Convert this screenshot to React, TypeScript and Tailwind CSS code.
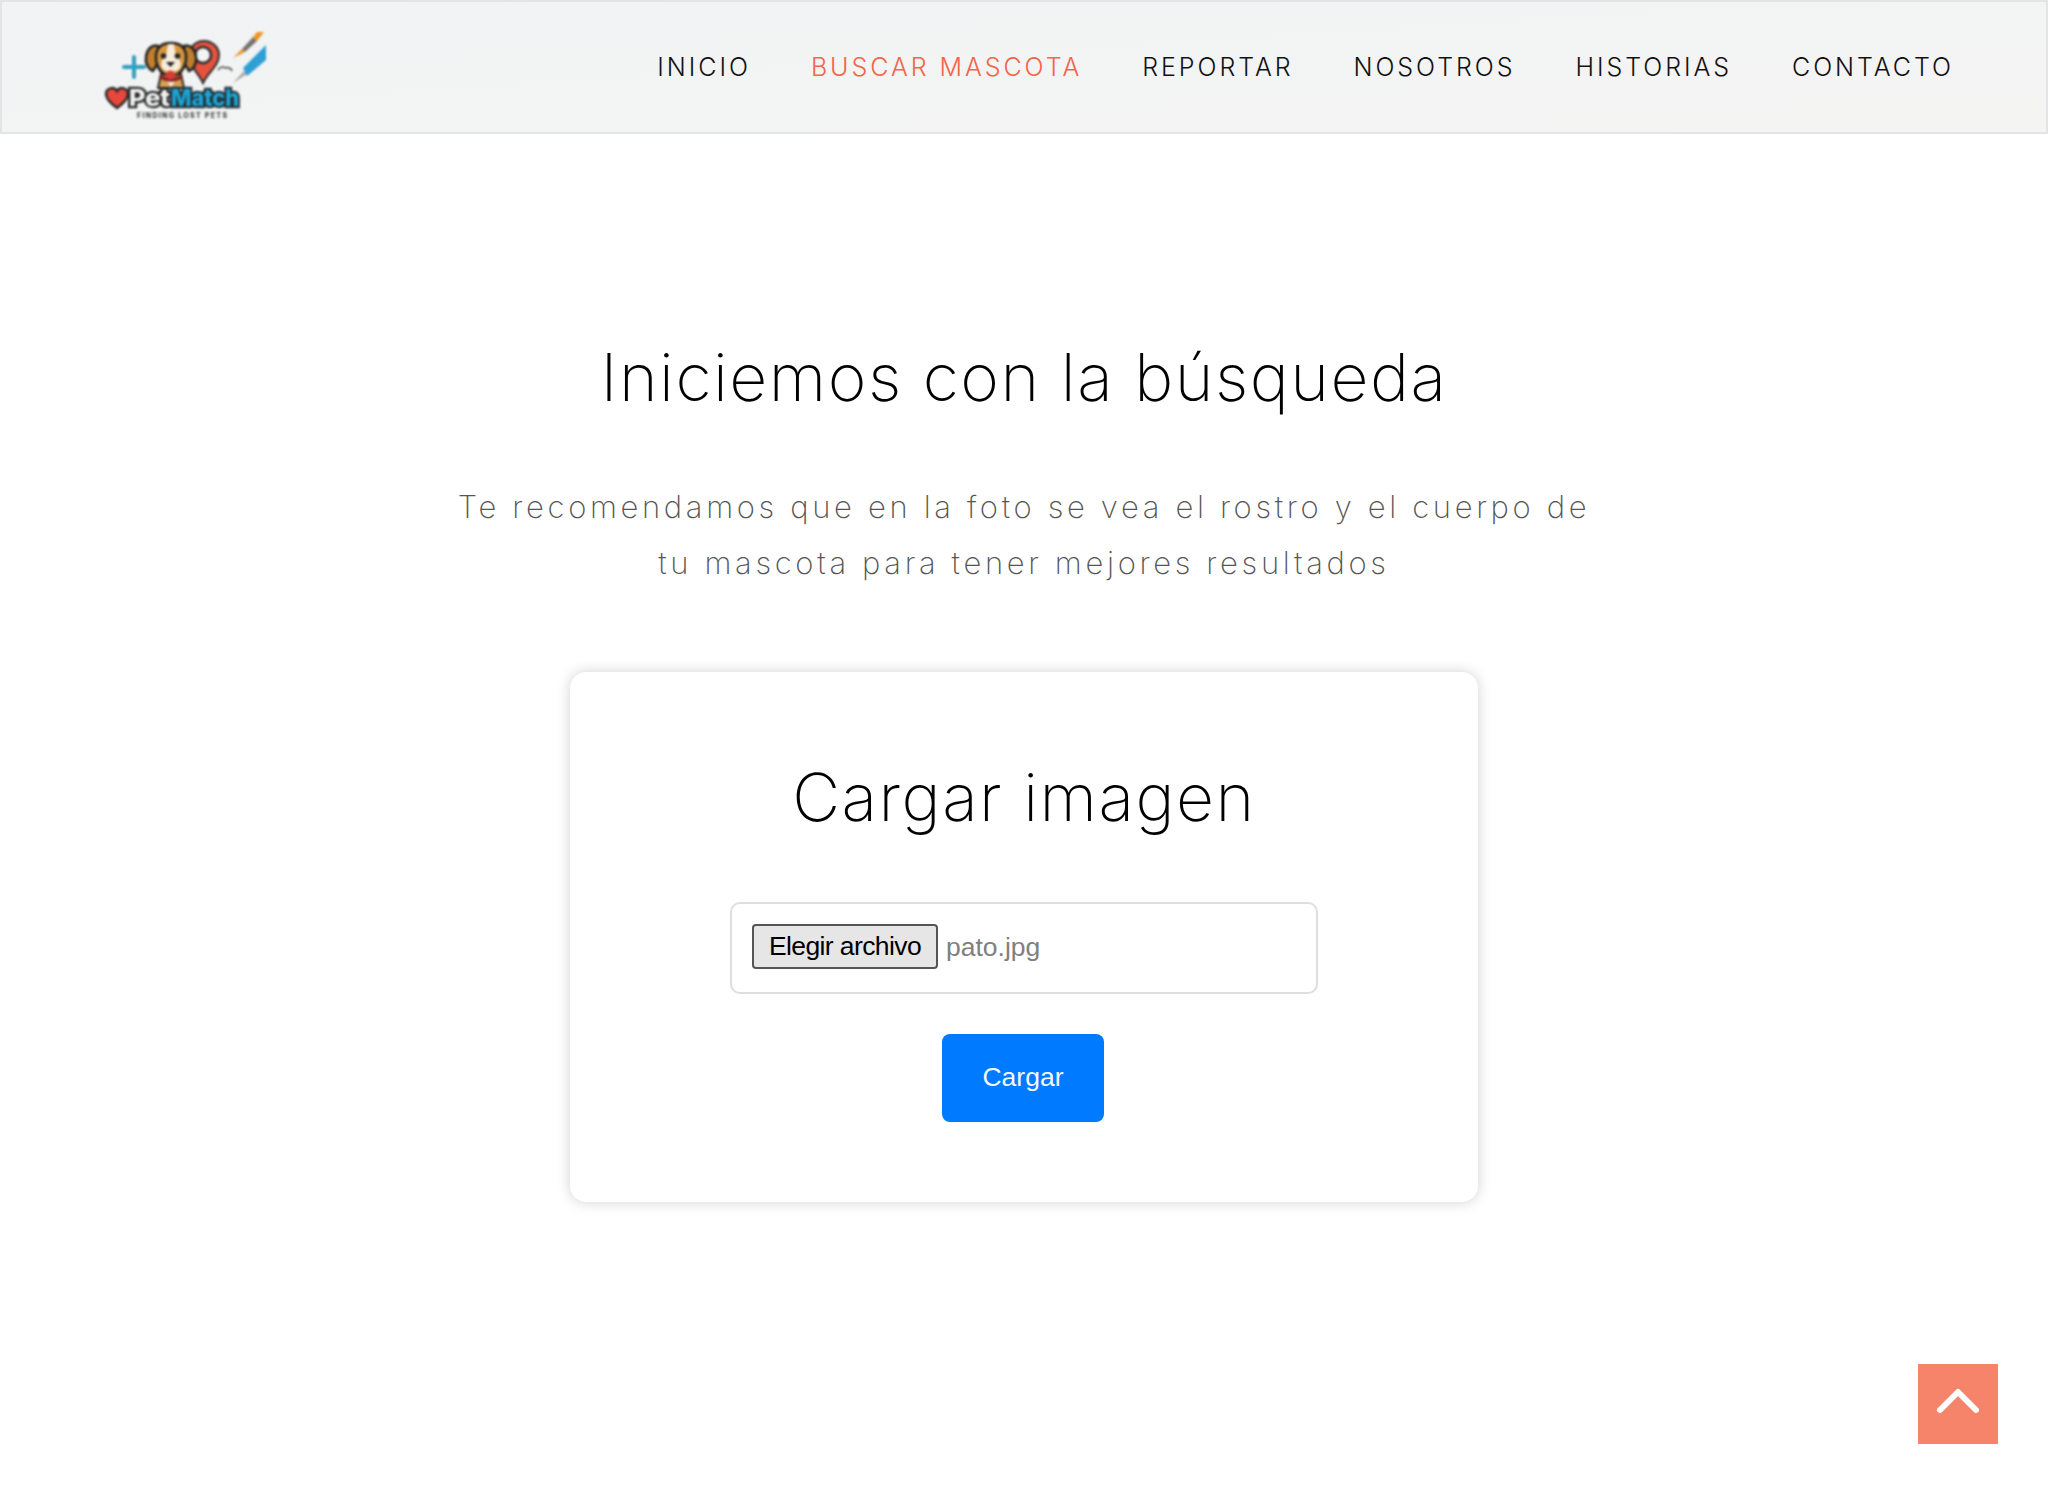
import { ChevronUp } from 'lucide-react';

const NAV_ITEMS = ['INICIO', 'BUSCAR MASCOTA', 'REPORTAR', 'NOSOTROS', 'HISTORIAS', 'CONTACTO'];

// Logo drawing: dog, pin, brushes and wordmark
const Logo = () => (
  <svg width="170" height="96" viewBox="0 0 170 96" className="mt-[18px] blur-[0.9px]">
    <path d="M24 39h20M34 29v20" stroke="#2f9fc0" strokeWidth="4" strokeLinecap="round" />
    {/* pin */}
    <path d="M104 13c-9 0-15 7-15 15 0 10 9 16 14 27 5-11 16-17 16-28 0-8-7-14-15-14z" fill="#e5533f" stroke="#2c2c2c" strokeWidth="2" />
    <circle cx="103" cy="27" r="8" fill="#f3f3f3" stroke="#2c2c2c" strokeWidth="2.500" />
    {/* dog */}
    <path d="M58 60l3-14h20l3 14z" fill="#d6a050" stroke="#2a2a2a" strokeWidth="2" />
    <path d="M66 51l5 9 5-9z" fill="#f5ead6" />
    <path d="M58 18c-6-2-11 3-12 11-1 6 2 12 7 14l5-8z" fill="#c07f2e" stroke="#222" strokeWidth="2.500" />
    <path d="M84 18c6-2 11 3 12 11 1 6-2 12-7 14l-5-8z" fill="#c07f2e" stroke="#222" strokeWidth="2.500" />
    <path d="M71 15c9 0 14 4 15 12 1 8-3 16-8 19-4 2-10 2-14 0-5-3-9-11-8-19 1-8 6-12 15-12z" fill="#d6963f" stroke="#222" strokeWidth="2.500" />
    <path d="M68 16h6l2 12c4 3 6 8 4 12-3 5-15 5-18 0-2-4 0-9 4-12z" fill="#f7eddc" />
    <circle cx="63.500" cy="28" r="2.800" fill="#222" />
    <circle cx="77.500" cy="28" r="2.800" fill="#222" />
    <path d="M66 34h9l-4.500 5z" fill="#1f1f1f" />
    <path d="M60 48c7 5 15 5 22 0" stroke="#8a2222" strokeWidth="3.500" fill="none" />
    <circle cx="70.500" cy="47" r="4.500" fill="#d83c35" />
    <path d="M118 42c2-3 5-4 7-2M125 40c3-1 6 0 7 3" stroke="#444" strokeWidth="1.500" fill="none" />
    {/* brushes */}
    <path d="M133 30l9-9 3 3z" fill="#e8932a" />
    <path d="M142 21l11-12 4 4-12 11z" fill="#77736c" />
    <path d="M153 9l4-5h7l-7 9z" fill="#ee9425" />
    <path d="M133 55l11-12 3 3z" fill="#a8a8a8" />
    <path d="M143 40l23-23v15l-19 16z" fill="#2f9fd6" />
    {/* wordmark */}
    <path d="M17 80c-7-5-11-9-11-14 0-6 8-8 11-3 3-5 11-3 11 3 0 5-4 9-11 14z" fill="#e8483c" stroke="#2a2a2a" strokeWidth="2.500" />
    <text x="29" y="78" fontFamily="Inter, sans-serif" fontSize="23" fontWeight="800" fill="#f2f2f2" stroke="#2a2a2a" strokeWidth="4.500" paintOrder="stroke" textLength="41" lengthAdjust="spacingAndGlyphs">Pet</text>
    <text x="71" y="78" fontFamily="Inter, sans-serif" fontSize="23" fontWeight="800" fill="#1da7d6" stroke="#22313a" strokeWidth="4.500" paintOrder="stroke" textLength="68" lengthAdjust="spacingAndGlyphs">Match</text>
    <text x="37" y="90" fontFamily="Inter, sans-serif" fontSize="7" fontWeight="800" fill="#444" textLength="90" lengthAdjust="spacing">FINDING LOST PETS</text>
  </svg>
);

export default function App() {
  return (
    <div className="relative min-h-[1494px] bg-white font-['Inter',sans-serif]">
      {/* Header */}
      <header className="flex h-[134px] items-center justify-between border-2 border-[#e3e4e6] bg-gradient-to-br from-[#f1f3f4] to-[#f4f4f3] pl-[98px] pr-[92px]">
        <Logo />
        <nav className="mt-[2px] flex gap-[60px]">
          {NAV_ITEMS.map((item) => (
            <a
              key={item}
              className={`text-[25px] font-light tracking-[2.95px] ${item === 'BUSCAR MASCOTA' ? 'text-[#f4654a]' : 'text-[#111]'}`}
            >
              {item}
            </a>
          ))}
        </nav>
      </header>

      {/* Main section */}
      <main className="flex flex-col items-center pt-[201px]">
        <h1 className="text-[66px] font-extralight leading-[84px] tracking-[1.5px] text-black">Iniciemos con la búsqueda</h1>
        <p className="mt-[60px] w-[1200px] text-center text-[31px] font-extralight leading-[56px] tracking-[3.65px] text-[#555]">
          Te recomendamos que en la foto se vea el rostro y el cuerpo de
          <br />
          tu mascota para tener mejores resultados
        </p>

        <section className="mt-[81px] flex h-[530px] w-[908px] flex-col items-center rounded-2xl bg-white pt-[83px] shadow-[0_0_14px_rgba(0,0,0,0.18)]">
          <h2 className="text-[66px] font-extralight leading-[84px] tracking-[1.5px] text-black">Cargar imagen</h2>
          <div className="mt-[63px] flex h-[92px] w-[588px] items-center rounded-[10px] border-2 border-[#dedede] pl-[20px]">
            <button className="mb-[3px] h-[45px] w-[186px] rounded-[4px] border-2 border-[#555] bg-[#e6e6e6] font-['Liberation_Sans',sans-serif] text-[26.500px] tracking-[-0.6px] text-black">
              Elegir archivo
            </button>
            <span className="ml-[8px] font-['Liberation_Sans',sans-serif] text-[26.500px] text-[#808080]">pato.jpg</span>
          </div>
          <button className="mr-[2px] mt-[40px] h-[88px] w-[162px] rounded-lg bg-[#007bff] font-['Liberation_Sans',sans-serif] text-[26.500px] text-[#f4f8ff]">
            Cargar
          </button>
        </section>
      </main>

      {/* Scroll to top */}
      <a className="absolute left-[1918px] top-[1364px] flex h-[80px] w-[80px] items-center justify-center bg-[#f5846b]">
        <ChevronUp className="mb-[6px] h-[72px] w-[72px] text-white" strokeWidth={2} />
      </a>
    </div>
  );
}
